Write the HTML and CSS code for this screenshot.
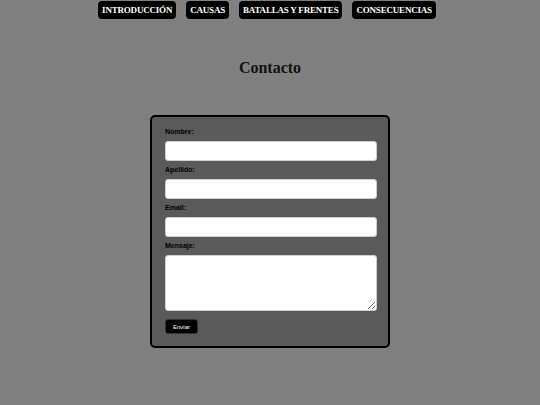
FILE: index.html
```html
<!DOCTYPE html>
<html lang="es">
<head>
<meta charset="utf-8">
<title>Contacto</title>
<link rel="stylesheet" href="styles.css">
</head>
<body>
<nav class="nav">
  <a class="nav-btn" href="#">INTRODUCCIÓN</a>
  <a class="nav-btn" href="#">CAUSAS</a>
  <a class="nav-btn" href="#">BATALLAS Y FRENTES</a>
  <a class="nav-btn" href="#">CONSECUENCIAS</a>
</nav>
<h1 class="title">Contacto</h1>
<form class="form">
  <label class="label">Nombre:</label>
  <input class="field" type="text">
  <label class="label">Apellido:</label>
  <input class="field" type="text">
  <label class="label">Email:</label>
  <input class="field" type="email">
  <label class="label">Mensaje:</label>
  <textarea class="field area"></textarea>
  <button class="send" type="button">Enviar</button>
</form>
</body>
</html>
```
FILE: styles.css
```css
* { box-sizing: border-box; }
html, body { margin: 0; padding: 0; }
body {
  background: #808080;
  width: 540px;
  height: 405px;
  overflow: hidden;
  font-family: "Liberation Serif", serif;
}
.nav {
  display: flex;
  justify-content: center;
  gap: 10px;
  padding: 1px 6px 0 0;
}
.nav-btn {
  display: block;
  background: #000;
  color: #fff;
  text-decoration: none;
  font-weight: bold;
  font-size: 9px;
  letter-spacing: -0.2px;
  line-height: 12px;
  padding: 3px 4px;
  border-radius: 4px;
}
.title {
  margin: 0;
  padding-top: 39px;
  text-align: center;
  font-size: 16px;
  line-height: 20px;
  color: #111;
}
.form {
  width: 240px;
  height: 233px;
  margin: 37px 0 0 150px;
  background: #5a5a5a;
  border: 2px solid #000;
  border-radius: 5px;
  padding: 10px 11px 0 13px;
  display: flex;
  flex-direction: column;
  align-items: flex-start;
  font-family: "Liberation Sans", sans-serif;
}
.label {
  font-size: 7px;
  line-height: 10px;
  font-weight: bold;
  color: #000;
  margin-bottom: 4px;
}
.field {
  width: 212px;
  height: 20px;
  margin: 0 0 4px 0;
  background: #fff;
  border: 1px solid #cfcfcf;
  border-radius: 3px;
  font-size: 8px;
}
.area {
  height: 56px;
  margin-bottom: 8px;
  resize: vertical;
}
.send {
  width: 33px;
  height: 15px;
  padding: 0;
  background: #000;
  color: #fff;
  border: 1px solid #333;
  border-radius: 3px;
  font-family: "Liberation Sans", sans-serif;
  font-size: 6px;
}
```
